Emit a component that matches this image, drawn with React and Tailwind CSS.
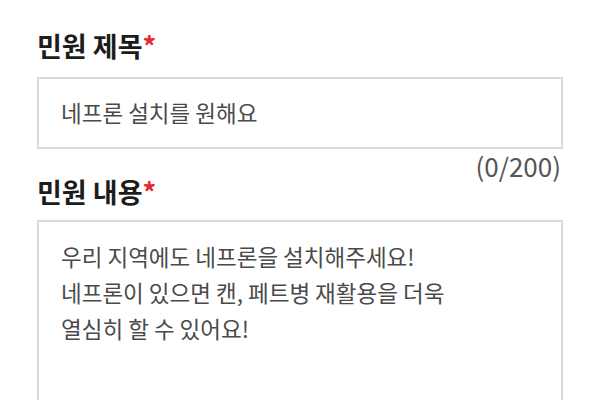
export default function App() {
  return (
    <div className="w-[600px] h-[400px] overflow-hidden bg-white px-[37px] pt-[27px] font-['Noto_Sans_CJK_KR','Noto_Sans',sans-serif]">
      <h2 className="text-[27px] leading-[38px] font-bold text-[#1c1c1c]">
        민원 제목<span className="text-[#e8262b]">*</span>
      </h2>
      <div className="mt-[12px] h-[72px] border-2 border-[#dadada] flex items-center px-[22px] text-[22.5px] text-[#4a4a4a]">
        네프론 설치를 원해요
      </div>
      <div className="flex justify-end pr-[2px] text-[26px] leading-[34px] text-[#555]">(0/200)</div>
      <h2 className="mt-[-10px] text-[27px] leading-[38px] font-bold text-[#1c1c1c]">
        민원 내용<span className="text-[#e8262b]">*</span>
      </h2>
      <div className="mt-[9px] h-[200px] border-2 border-[#dadada] px-[22px] pt-[16px] text-[22.5px] leading-[36px] text-[#4a4a4a]">
        우리 지역에도 네프론을 설치해주세요!
        <br />
        네프론이 있으면 캔, 페트병 재활용을 더욱
        <br />
        열심히 할 수 있어요!
      </div>
    </div>
  )
}
